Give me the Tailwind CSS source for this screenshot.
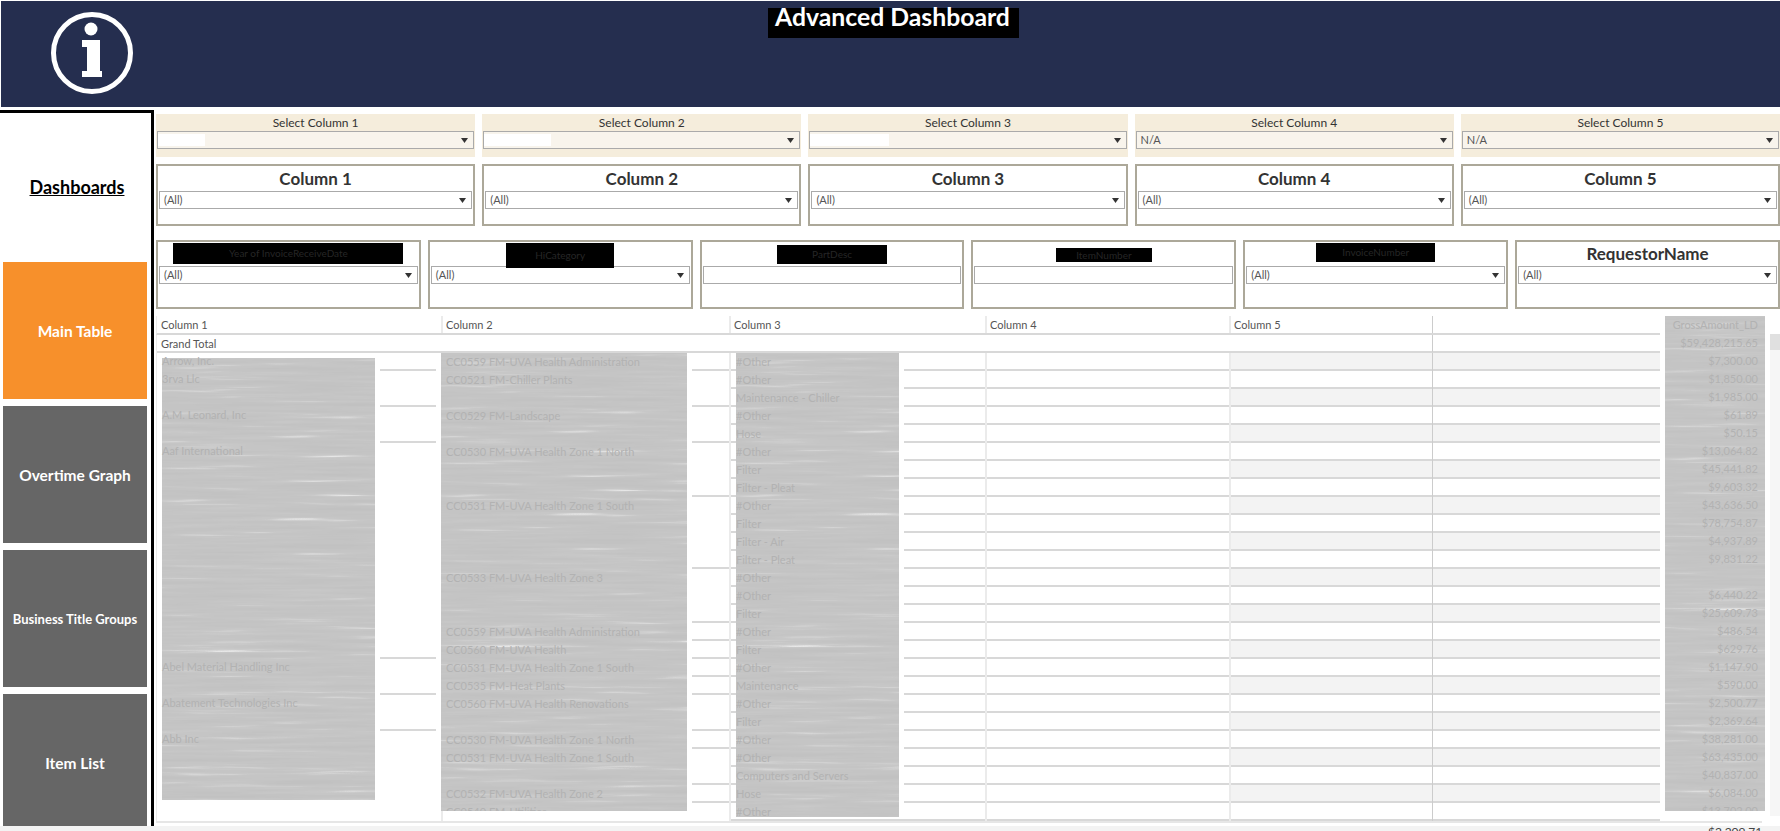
<!DOCTYPE html>
<html lang="en">
<head>
    <meta charset="UTF-8">
    <title>Advanced Dashboard</title>
    <script src="https://cdn.jsdelivr.net/npm/@tailwindcss/browser@4"></script>
</head>
<body class="w-[1780px] h-[831px] overflow-hidden bg-white font-['Lato','Noto_Sans',sans-serif] text-[#333]">
    <!-- streaky grey used for the redacted table columns -->
    <svg class="absolute w-0 h-0">
        <filter id="smear" x="0" y="0" width="100%" height="100%" color-interpolation-filters="sRGB">
            <feTurbulence type="fractalNoise" baseFrequency="0.009 0.22" numOctaves="3" seed="7"/>
            <feColorMatrix type="matrix" values="1 0 0 0 0  1 0 0 0 0  1 0 0 0 0  0 0 0 0 1"/>
            <feComponentTransfer>
                <feFuncR type="table" tableValues="0.76 0.76 0.76 0.765 0.77 0.775 0.785 0.83 0.92 0.96"/>
                <feFuncG type="table" tableValues="0.76 0.76 0.76 0.765 0.77 0.775 0.785 0.83 0.92 0.96"/>
                <feFuncB type="table" tableValues="0.76 0.76 0.76 0.765 0.77 0.775 0.785 0.83 0.92 0.96"/>
            </feComponentTransfer>
        </filter>
    </svg>

    <header class="h-[106px] mt-[1px] ml-[1px] bg-[#252e4f] flex items-start">
        <svg class="ml-[50px] mt-[11px] w-[82px] h-[82px] shrink-0" viewBox="0 0 82 82">
            <circle cx="41" cy="41" r="38.5" fill="none" stroke="white" stroke-width="5"/>
            <circle cx="40" cy="17" r="6.5" fill="white"/>
            <path d="M31 28H49V59H51V65H31V59H36V35H31Z" fill="white"/>
        </svg>
        <h1 class="ml-[635px] mt-[7px] w-[251px] h-[30px] pl-[7px] bg-black text-white font-bold text-[24.75px] leading-[18px]">Advanced Dashboard</h1>
    </header>

    <div class="flex h-[716px] mt-[3px]">
        <aside class="w-[154px] shrink-0 border-t-[3px] border-r-[3px] border-black pl-[3px] flex flex-col">
            <div class="h-[148px] mb-[1px] shrink-0 flex items-center justify-center font-bold text-[18px] text-black underline">Dashboards</div>
            <a class="w-[144px] h-[137px] pt-[2px] flex items-center justify-center bg-[#f7902b] text-white font-bold text-[15.5px]">Main Table</a>
            <a class="w-[144px] h-[137px] pt-[2px] mt-[7px] flex items-center justify-center bg-[#666666] text-white font-bold text-[15.5px]">Overtime Graph</a>
            <a class="w-[144px] h-[137px] pt-[2px] mt-[7px] flex items-center justify-center bg-[#666666] text-white font-bold text-[13px]">Business Title Groups</a>
            <a class="w-[144px] h-[132px] pt-[8px] mt-[7px] flex items-center justify-center bg-[#666666] text-white font-bold text-[15.5px]">Item List</a>
        </aside>

        <main class="ml-[2px] w-[1624px] pt-[4px] flex flex-col">
            <!-- parameter row -->
            <div id="params" class="flex gap-[7px] h-[43px] shrink-0"></div>
            <!-- column filters -->
            <div id="columns" class="flex gap-[7px] h-[62px] mt-[7px] shrink-0"></div>
            <!-- other filters -->
            <div id="filters" class="flex gap-[7px] h-[69px] mt-[14px] shrink-0"></div>

            <!-- table -->
            <div class="relative w-[1606px] h-[510px] mt-[7px] shrink-0 text-[11px]">
                <div class="flex w-[1504px] h-[19px] border-b-2 border-[#d8d8d8] text-[#555] leading-[18px] border-l border-l-[#ebebeb]">
                    <div class="w-[284px] pl-[4px]">Column 1</div>
                    <div class="w-[288px] pl-[3px] border-l-2 border-[#ebebeb]">Column 2</div>
                    <div class="w-[256px] pl-[3px] border-l-2 border-[#ebebeb]">Column 3</div>
                    <div class="w-[244px] pl-[3px] border-l-2 border-[#ebebeb]">Column 4</div>
                    <div class="w-[203px] pl-[3px] border-l-2 border-[#ebebeb]">Column 5</div>
                    <div class="w-[228px] border-l border-[#cccccc]"></div>
                </div>
                <div class="flex w-[1504px] h-[18px] border-l border-[#ebebeb]">
                    <div class="w-[1275px] h-[18px] pl-[4px] border-b-2 border-[#d8d8d8] text-[#555] leading-[17px]">Grand Total</div>
                    <div class="w-[228px] h-[18px] border-l border-b-2 border-[#cccccc] border-b-[#d8d8d8]"></div>
                </div>
                <div id="rows" class="w-[1504px]"></div>
                <div class="h-[5px] border-t-2 border-[#e6e6e6]"></div>

                <div id="panel1" class="absolute left-[6px] top-[42px] w-[213px] h-[442px]"></div>
                <div id="panel2" class="absolute left-[285px] top-[37px] w-[251px] h-[458px] overflow-hidden border-r-[5px] border-white"></div>
                <div id="panel3" class="absolute left-[580px] top-[37px] w-[168px] h-[464px] overflow-hidden border-r-[5px] border-white"></div>
                <div id="panel4" class="absolute left-[1509px] top-0 w-[100px] h-[495px] overflow-hidden"></div>
                <span class="absolute left-[1552px] top-[508px] text-[#444] text-[12px] leading-[16px]">$2,209.71</span>
            </div>
        </main>
    </div>
    <div class="h-[5px] bg-[#f3f3f3]"></div>

    <!-- table scrollbar -->
    <div class="absolute left-[1770px] top-[334px] w-[10px] h-[482px] bg-[#f6f6f6]">
        <div class="h-[16px] bg-[#e0e0e0]"></div>
    </div>

    <script>
        const arrow = '<svg class="w-[7px] h-[5px] shrink-0" viewBox="0 0 7 5"><path d="M0 0H7L3.5 5Z" fill="#333"/></svg>';

        function dropdown(value, boxClass) {
            return '<div class="h-[18px] flex items-center justify-between pl-[4px] pr-[5px] border border-[#aaaaaa] ' + boxClass + '">' +
                '<span class="text-[11px] text-[#555]">' + value + '</span>' + arrow + '</div>';
        }

        const blanks = ['w-[47px]', 'w-[67px]', 'w-[79px]', 'w-0', 'w-0'];
        document.getElementById('params').innerHTML = [1, 2, 3, 4, 5].map(function (n, i) {
            const value = n > 3 ? 'N/A' : '';
            const patch = n > 3 ? '' : '<span class="absolute left-[1px] top-[3px] h-[12px] bg-white ' + blanks[i] + '"></span>';
            return '<div class="flex-1 bg-[#f5eddc]">' +
                '<div class="h-[17px] flex items-center justify-center text-[12px] text-[#333]">Select Column ' + n + '</div>' +
                '<div class="relative mx-[1px]">' + dropdown(value, 'bg-[#f8f4ec]') + patch + '</div></div>';
        }).join('');

        document.getElementById('columns').innerHTML = [1, 2, 3, 4, 5].map(function (n) {
            return '<div class="flex-1 border-2 border-[#aca899] px-[1px]">' +
                '<div class="h-[25px] flex items-center justify-center font-bold text-[17px] text-[#333]">Column ' + n + '</div>' +
                dropdown('(All)', 'bg-white') + '</div>';
        }).join('');

        // black boxes sit over the filter names in the reference
        const filters = [
            { label: 'Year of InvoiceReceiveDate', box: 'w-[230px] h-[21px] mt-[1px]', drop: true },
            { label: 'HiCategory', box: 'w-[108px] h-[25px] mt-[1px]', drop: true },
            { label: 'PartDesc', box: 'w-[110px] h-[19px] mt-[3px]', drop: false },
            { label: 'ItemNumber', box: 'w-[96px] h-[14px] mt-[6px]', drop: false },
            { label: 'InvoiceNumber', box: 'w-[119px] h-[19px] mt-[1px]', drop: true },
            { label: 'RequestorName', box: '', drop: true }
        ];
        document.getElementById('filters').innerHTML = filters.map(function (f) {
            const title = f.box
                ? '<div class="flex justify-center h-[24px] shrink-0"><div class="bg-black text-[#262626] text-[10px] overflow-hidden whitespace-nowrap flex items-center justify-center ' + f.box + '">' + f.label + '</div></div>'
                : '<div class="h-[24px] flex items-center justify-center font-bold text-[17px] text-[#333]">' + f.label + '</div>';
            const input = f.drop ? dropdown('(All)', 'bg-white') : '<div class="h-[18px] border border-[#aaaaaa]"></div>';
            return '<div class="flex-1 min-w-0 border-2 border-[#aca899] px-[1px]">' + title + input + '</div>';
        }).join('');

        // rows where the merged cells of column 1 and 2 end
        const col1Lines = [0, 2, 4, 16, 18, 20];
        const col2Lines = [0, 2, 4, 7, 11, 14, 15, 16, 17, 18, 20, 21, 23, 24];
        let rows = '';
        for (let k = 0; k < 26; k++) {
            const stripe = k % 2 === 0 ? 'bg-[#f3f3f3]' : 'bg-white';
            rows += '<div class="flex h-[18px] border-l border-[#ebebeb]">' +
                '<div class="w-[284px] pr-[5px]"><div class="h-[18px] ml-[223px] ' + (col1Lines.includes(k) ? 'border-b-2 border-[#d8d8d8]' : '') + '"></div></div>' +
                '<div class="w-[288px] border-l-2 border-[#ebebeb]"><div class="h-[18px] ml-[249px] ' + (col2Lines.includes(k) ? 'border-b-2 border-[#d8d8d8]' : '') + '"></div></div>' +
                '<div class="w-[256px] border-l-2 border-[#ebebeb]"><div class="h-[18px] border-b-2 border-[#d8d8d8]"></div></div>' +
                '<div class="w-[244px] border-l-2 border-[#ebebeb]"><div class="h-[18px] border-b-2 border-[#d8d8d8]"></div></div>' +
                '<div class="w-[203px] border-l-2 border-[#ebebeb] ' + stripe + '"><div class="h-[18px] border-b-2 border-[#d8d8d8]"></div></div>' +
                '<div class="w-[228px] border-l border-[#cccccc] ' + stripe + '"><div class="h-[18px] border-b-2 border-[#d8d8d8]"></div></div>' +
                '</div>';
        }
        document.getElementById('rows').innerHTML = rows;

        const smear = '<svg class="absolute inset-0 w-full h-full"><rect width="100%" height="100%" filter="url(#smear)"/></svg>';

        function fillPanel(id, texts, count, rowClass, shiftClass) {
            let html = '';
            for (let i = 0; i < count; i++) {
                html += '<div class="h-[18px] leading-[18px] whitespace-nowrap text-[#b2b2b2] ' + rowClass + '">' + (texts[i] || '') + '</div>';
            }
            document.getElementById(id).innerHTML = smear + '<div class="relative ' + shiftClass + '">' + html + '</div>';
        }

        fillPanel('panel1', {
            0: 'Arrow, Inc.', 1: '3rva Llc', 3: 'A.M. Leonard, Inc', 5: 'Aaf International',
            17: 'Abel Material Handling Inc', 19: 'Abatement Technologies Inc', 21: 'Abb Inc'
        }, 22, '', '-mt-[6px]');

        fillPanel('panel2', {
            0: 'CC0559 FM-UVA Health Administration', 1: 'CC0521 FM-Chiller Plants', 3: 'CC0529 FM-Landscape',
            5: 'CC0530 FM-UVA Health Zone 1 North', 8: 'CC0531 FM-UVA Health Zone 1 South', 12: 'CC0533 FM-UVA Health Zone 3',
            15: 'CC0559 FM-UVA Health Administration', 16: 'CC0560 FM-UVA Health', 17: 'CC0531 FM-UVA Health Zone 1 South',
            18: 'CC0535 FM-Heat Plants', 19: 'CC0560 FM-UVA Health Renovations', 21: 'CC0530 FM-UVA Health Zone 1 North',
            22: 'CC0531 FM-UVA Health Zone 1 South', 24: 'CC0532 FM-UVA Health Zone 2', 25: 'CC0540 FM-Utilities'
        }, 26, 'pl-[5px]', '');

        fillPanel('panel3', {
            0: '#Other', 1: '#Other', 2: 'Maintenance - Chiller', 3: '#Other', 4: 'Hose', 5: '#Other', 6: 'Filter',
            7: 'Filter - Pleat', 8: '#Other', 9: 'Filter', 10: 'Filter - Air', 11: 'Filter - Pleat', 12: '#Other',
            13: '#Other', 14: 'Filter', 15: '#Other', 16: 'Filter', 17: '#Other', 18: 'Maintenance', 19: '#Other',
            20: 'Filter', 21: '#Other', 22: '#Other', 23: 'Computers and Servers', 24: 'Hose', 25: '#Other'
        }, 26, '', '');

        fillPanel('panel4', [
            'GrossAmount_LD', '$59,428,215.65', '$7,300.00', '$1,850.00', '$1,985.00', '$61.89', '$50.15', '$13,064.82',
            '$45,441.82', '$9,603.32', '$43,636.50', '$78,754.87', '$4,937.89', '$9,831.22', '', '$6,440.22', '$25,609.73',
            '$486.54', '$629.76', '$1,147.90', '$590.00', '$2,500.77', '$2,369.64', '$38,281.00', '$63,435.00', '$40,837.00',
            '$6,084.00', '$13,702.00'
        ], 28, 'text-right pr-[7px]', '');
    </script>
</body>
</html>
